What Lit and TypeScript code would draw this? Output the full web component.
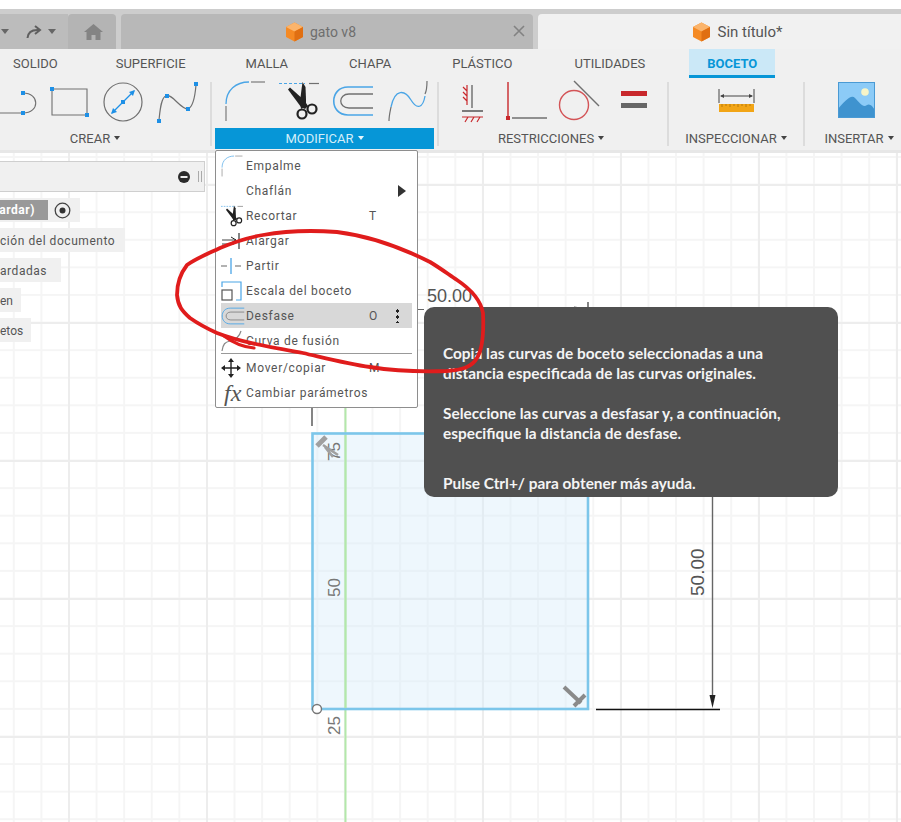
import { LitElement, html, css } from "lit";
import { customElement } from "lit/decorators.js";

const BLUE = "#4aa5e6";
const GREY = "#707070";

const square = (x: number, y: number, s = 4) =>
  html`<svg x=${x - s / 2} y=${y - s / 2} width=${s} height=${s} overflow="visible"><rect width=${s} height=${s} fill="#1e90e6"></rect></svg>`;

const fillet = (w: number, h: number) => html`<svg width=${w} height=${h} viewBox="0 0 42 42" fill="none">
  <path d="M2 26V41" stroke=${GREY} stroke-width="1.1"></path>
  <path d="M2 24C2 10 12 2 25 2" stroke=${BLUE} stroke-width="1.3"></path>
  <path d="M27 2H41" stroke=${GREY} stroke-width="1.1"></path>
</svg>`;

const scissors = (w: number, h: number) => html`<svg width=${w} height=${h} viewBox="0 0 40 40" fill="none">
  <path d="M0 2.5H26" stroke=${BLUE} stroke-width="1.2" stroke-dasharray="3 2"></path>
  <path d="M30 2.5H40" stroke=${GREY} stroke-width="1.2"></path>
  <path d="M9 8.5L11 6.5L25 19L29 25L26 28L22 26Z" fill="#222"></path>
  <path d="M23.5 1L26.5 6L27 18L27 25L22 28L21 20Z" fill="#222"></path>
  <circle cx="23" cy="33" r="4.5" stroke="#222" stroke-width="2.2"></circle>
  <circle cx="33" cy="28" r="4.5" stroke="#222" stroke-width="2.2"></circle>
</svg>`;

const offset = (w: number, h: number) => html`<svg width=${w} height=${h} viewBox="0 0 42 32" fill="none">
  <path d="M41 2H16C-3 2-3 30 16 30H41" stroke=${BLUE} stroke-width="1.6"></path>
  <path d="M41 9H17C6 9 6 23 17 23H41" stroke=${GREY} stroke-width="1.3"></path>
</svg>`;

const spline = (w: number, h: number) => html`<svg width=${w} height=${h} viewBox="0 0 42 42" fill="none">
  <path d="M2 41C2 36 3 32 4 27" stroke=${GREY} stroke-width="1.2"></path>
  <path d="M4 27C8 8 18 10 24 20C30 30 36 28 38 16" stroke=${BLUE} stroke-width="1.3"></path>
  <path d="M38 14C40 10 40 6 40 1" stroke=${GREY} stroke-width="1.2"></path>
</svg>`;

const cube = () => html`<svg width="19" height="20" viewBox="0 0 19 20">
  <path d="M9.5 0.5L18 5V15L9.5 19.5L1 15V5Z" fill="#f58a24"></path>
  <path d="M9.5 0.5L18 5L9.5 9.5L1 5Z" fill="#fbb46b"></path>
  <path d="M9.5 9.5L18 5V15L9.5 19.5Z" fill="#e06f12"></path>
</svg>`;

@customElement("app-root")
export class AppRoot extends LitElement {
  static styles = css`
    :host { display: block; width: 901px; height: 822px; position: relative; overflow: hidden; background: #fff; font-family: Roboto, "Liberation Sans", sans-serif; color: #555; }
    .top-gap { height: 9px; background: #fff; }
    .strip { height: 5px; background: #cdcdcd; }
    .tabbar { height: 35px; display: flex; background: #cdcdcd; }
    .qat { width: 68px; background: #bcbcbc; display: flex; align-items: center; gap: 6px; flex: none; }
    .tri { width: 0; height: 0; border-left: 4px solid transparent; border-right: 4px solid transparent; border-top: 5px solid #666; }
    .qat .tri:first-child { margin-left: 1px; margin-right: 11px; }
    .home { width: 48px; flex: none; background: #b4b4b4; border-radius: 4px 4px 0 0; display: flex; align-items: center; justify-content: center; padding-left: 3px; box-sizing: border-box; }
    .doc { flex: none; margin-left: 5px; width: 412px; background: #b8b8b8; border-radius: 4px 4px 0 0; display: flex; align-items: center; justify-content: center; color: #6e6e6e; font-size: 14px; position: relative; }
    .doc .x { position: absolute; left: 392px; top: 11px; }
    .doc.active { width: 363px; background: #f1f1f1; color: #555; border-radius: 4px 0 0 0; font-size: 15px; }
    .doc .in { display: flex; align-items: center; gap: 6px; margin-left: -13px; padding-top: 1px; }
    .doc.active .in { margin-left: 36px; }
    .ribbon { height: 101px; background: #f0f0f0; display: flex; flex-direction: column; }
    .tabs { height: 29px; display: flex; padding-left: 13px; font-size: 13px; align-items: center; }
    .tabs span { white-space: nowrap; }
    .tabs .m1 { margin-right: 58px; }
    .tabs .m2 { margin-right: 60px; }
    .tabs .m3 { margin-right: 61px; }
    .tabs .m4 { margin-right: 61px; }
    .tabs .m5 { margin-right: 62px; }
    .tabs .sel { margin-left: 44px; height: 29px; width: 86px; box-sizing: border-box; background: #cbe8f7; border-bottom: 3px solid #0696d7; color: #0696d7; font-weight: 700; display: flex; align-items: center; justify-content: center; padding-top: 3px; }
    .groups { display: flex; height: 71px; }
    .group { display: flex; flex-direction: column; flex: none; }
    .icons { height: 50px; box-sizing: border-box; padding-bottom: 4px; display: flex; align-items: center; overflow: hidden; }
    .label { height: 21px; font-size: 13px; display: flex; align-items: center; justify-content: center; gap: 4px; white-space: nowrap; box-sizing: border-box; padding-bottom: 1px; }
    .label .tri { border-top-color: #444; border-left-width: 3.5px; border-right-width: 3.5px; border-top-width: 4px; }
    .divider { width: 2px; height: 64px; background: #dcdcdc; flex: none; margin-top: 4px; }
    .g-crear { width: 210px; }
    .g-crear .label { padding-right: 20px; }
    .g-mod { width: 219px; margin: 0 3px; }
    .g-mod .icons { padding-left: 9px; gap: 13px; }
    .g-mod .label { background: #0696d7; color: #d4eef9; }
    .g-mod .label .tri { border-top-color: #e6f6fc; }
    .g-res { width: 228px; }
    .g-res .label { padding-right: 4px; }
    .g-ins { width: 134px; }
    .g-img { width: 96px; }
    .g-img .label { padding-left: 12px; }
    .canvas { position: relative; height: 672px; overflow: hidden; background-color: #fff;
      box-shadow: inset 0 3px 0 #e7e7e7;
      background-image:
        linear-gradient(#ededed 2px, transparent 2px),
        linear-gradient(90deg, #ededed 2px, transparent 2px),
        linear-gradient(#f5f5f5 2px, transparent 2px),
        linear-gradient(90deg, #f5f5f5 2px, transparent 2px);
      background-size: 138px 138px, 138px 138px, 27.6px 27.6px, 27.6px 27.6px;
      background-position: 0 34px, 68px 0, 0 6px, 12.8px 0;
    }
    .drawing { position: absolute; inset: 0; }
    .panel { position: absolute; left: 0; top: 11px; display: flex; flex-direction: column; align-items: flex-start; font-size: 12px; color: #555; }
    .browser { width: 205px; height: 31px; box-sizing: border-box; background: #f0f0f0; border: 1px solid #cfcfcf; border-left: 0; display: flex; align-items: center; justify-content: flex-end; gap: 8px; padding-right: 2px; margin-bottom: 6px; }
    .grip { width: 2px; height: 11px; border: 1px solid #aaa; border-width: 0 1px; }
    .chip { background: #f0f0f0; height: 24px; box-sizing: border-box; padding-top: 1px; display: flex; align-items: center; margin-bottom: 6px; white-space: nowrap; letter-spacing: 0.55px; }
    .chip.first { width: 80px; padding-top: 0; }
    .saved { background: #999; color: #fff; font-weight: 700; height: 20px; width: 48px; box-sizing: border-box; padding-right: 13px; overflow: hidden; display: flex; align-items: center; justify-content: flex-end; flex: none; }
    .radio { margin-left: 6px; }
    .c2 { padding-right: 10px; }
    .c3 { padding-right: 14px; }
    .c4 { padding-right: 8px; letter-spacing: 0; }
    .c5 { padding-right: 8px; letter-spacing: 0; }
    .menu { position: absolute; left: 215px; top: 0; width: 203px; height: 258px; box-sizing: border-box; background: #fff; border: 1px solid #8e8e8e; border-radius: 2px; padding: 2px 5px 0; font-size: 12px; color: #555; letter-spacing: 0.7px; }
    .row { display: grid; grid-template-columns: 25px 123px 20px 22px; height: 25px; align-items: center; }
    .row.hi { background: #d8d8d8; }
    .row .ic { display: flex; align-items: center; justify-content: flex-start; }
    .row .end { display: flex; justify-content: center; }
    .arrow { width: 0; height: 0; margin-left: 4px; border-top: 6px solid transparent; border-bottom: 6px solid transparent; border-left: 8px solid #333; }
    .kebab { width: 3px; height: 15px; margin-right: 5px; background: radial-gradient(circle at center, #222 1.5px, transparent 1.6px) center top / 3px 6px repeat-y; }
    .sep { height: 1px; background: #999; margin: 0 0 1px; }
    .fx { font-family: "Liberation Serif", serif; font-style: italic; font-size: 24px; color: #555; line-height: 20px; letter-spacing: 0; margin-left: 3px; }
    .tip { position: absolute; left: 424px; top: 157px; width: 414px; height: 190px; box-sizing: border-box; background: #505050; border-radius: 10px; padding: 36px 20px 0 19px; color: #f4f4f4; font-family: Lato, sans-serif; font-weight: 700; font-size: 15.4px; line-height: 20px; }
    .tip p { margin: 0 0 20px; white-space: nowrap; }
    .tip p.last { margin-top: 30px; }
    .scribble { position: absolute; inset: 0; pointer-events: none; }
  `;

  render() {
    const menu = [
      { t: "Empalme", ic: fillet(22, 22) },
      { t: "Chaflán", end: html`<div class="arrow"></div>` },
      { t: "Recortar", k: "T", ic: scissors(22, 22) },
      { t: "Alargar", ic: html`<svg width="24" height="20" viewBox="0 0 24 20" fill="none"><path d="M1 9H15M1 13H13" stroke="#444" stroke-width="1"></path><path d="M10 6L15 9L10 12" stroke="#222" fill="none"></path><path d="M18 2V18" stroke="#333" stroke-width="1.2"></path></svg>` },
      { t: "Partir", ic: html`<svg width="22" height="18" viewBox="0 0 22 18" fill="none"><path d="M0 9H6M14 9H20" stroke="#666" stroke-width="1.2"></path><path d="M10 1V17" stroke=${BLUE} stroke-width="1.3"></path></svg>` },
      { t: "Escala del boceto", ic: html`<svg width="22" height="20" viewBox="0 0 22 20" fill="none"><path d="M1 6V1H20V19H15" stroke=${BLUE} stroke-width="1.2"></path><rect x="1" y="9" width="10" height="10" stroke="#555" stroke-width="1.2"></rect></svg>` },
      { t: "Desfase", k: "O", hi: true, ic: offset(24, 18), end: html`<div class="kebab"></div>` },
      { t: "Curva de fusión", ic: html`<svg width="22" height="22" viewBox="0 0 22 22" fill="none"><path d="M1 21C2 14 4 12 9 11S18 8 20 1" stroke="#888" stroke-width="1.2"></path></svg>` },
      { sep: true },
      { t: "Mover/copiar", k: "M", ic: html`<svg width="20" height="20" viewBox="0 0 20 20" fill="#222"><path d="M9.3 4H10.7V9.3H16V10.7H10.7V16H9.3V10.7H4V9.3H9.3Z"></path><path d="M10 0L13 4H7ZM10 20L7 16H13ZM0 10L4 7V13ZM20 10L16 13V7Z"></path></svg>` },
      { t: "Cambiar parámetros", ic: html`<span class="fx">fx</span>` },
    ] as any[];

    return html`
      <div class="top-gap"></div>
      <div class="strip"></div>
      <div class="tabbar">
        <div class="qat">
          <div class="tri"></div>
          <svg width="16" height="14" viewBox="0 0 16 14" fill="none"><path d="M1.5 13C2 7 6 4.5 13 5" stroke="#5f5f5f" stroke-width="2"></path><path d="M9 1L14 5L9 9" stroke="#5f5f5f" stroke-width="2"></path></svg>
          <div class="tri"></div>
        </div>
        <div class="home">
          <svg width="19" height="16" viewBox="0 0 19 16"><path d="M9.5 0L19 8H16.5V16H11.5V11H7.5V16H2.5V8H0Z" fill="#848484"></path></svg>
        </div>
        <div class="doc">
          <div class="in">${cube()}<span>gato v8</span></div>
          <svg class="x" width="12" height="12" viewBox="0 0 12 12"><path d="M1 1L11 11M11 1L1 11" stroke="#828282" stroke-width="1.6"></path></svg>
        </div>
        <div class="doc active"><div class="in">${cube()}<span>Sin título*</span></div></div>
      </div>
      <div class="ribbon">
        <div class="tabs">
          <span class="m1">SOLIDO</span><span class="m2">SUPERFICIE</span><span class="m3">MALLA</span><span class="m4">CHAPA</span><span class="m5">PLÁSTICO</span><span>UTILIDADES</span><span class="sel">BOCETO</span>
        </div>
        <div class="groups">
          <div class="group g-crear">
            <div class="icons">
              <svg width="200" height="44" viewBox="0 0 200 44" fill="none">
                <path d="M0 34H23M23 14C40 14 40 34 23 34" stroke=${GREY} stroke-width="1.1"></path>
                ${square(23, 14)}${square(23, 34)}
                <path d="M52 10H87V36H52Z" stroke=${GREY} stroke-width="1.1"></path>
                ${square(52, 10)}${square(87, 36)}
                <circle cx="123" cy="23" r="19" stroke=${GREY} stroke-width="1.2"></circle>
                <path d="M112 34L134 12" stroke="#1e90e6" stroke-width="1.2"></path>
                <path d="M111 35L113 29L117 33ZM135 11L129 13L133 17Z" fill="#1e90e6"></path>
                ${square(123, 23)}
                <path d="M159 41C160 32 161 18 166 17C172 14 180 30 188 30C193 28 195 18 196 6" stroke=${GREY} stroke-width="1.2"></path>
                ${square(159, 42)}${square(167, 17)}${square(188, 30)}${square(196, 5)}
              </svg>
            </div>
            <div class="label"><span>CREAR</span><div class="tri"></div></div>
          </div>
          <div class="divider"></div>
          <div class="group g-mod">
            <div class="icons">
              ${fillet(42, 42)}${scissors(40, 40)}${offset(42, 32)}${spline(42, 42)}
            </div>
            <div class="label"><span>MODIFICAR</span><div class="tri"></div></div>
          </div>
          <div class="divider"></div>
          <div class="group g-res">
            <div class="icons">
              <svg width="226" height="44" viewBox="0 0 226 44" fill="none">
                <path d="M33 6V29" stroke="#555" stroke-width="1.2"></path>
                <path d="M28 6V26M24 8L28 12M24 13L28 17M24 18L28 22" stroke="#c8282c" stroke-width="1.2"></path>
                <path d="M23 32H44" stroke="#555" stroke-width="1.5"></path>
                <path d="M23 38H44M26 43L29 38M32 43L35 38M38 43L41 38" stroke="#c8282c" stroke-width="1.2"></path>
                <path d="M69 3V37" stroke="#c8282c" stroke-width="1.4"></path>
                <rect x="67" y="37" width="4" height="4" fill="#c8282c"></rect>
                <path d="M73 39H108" stroke=${GREY} stroke-width="1.4"></path>
                <circle cx="135" cy="26" r="14.5" stroke="#d35457" stroke-width="1.4"></circle>
                <path d="M135 2L160 27" stroke=${GREY} stroke-width="1.4"></path>
                <rect x="182" y="12" width="26" height="5" fill="#c8282c"></rect>
                <rect x="182" y="24" width="26" height="5" fill="#666"></rect>
              </svg>
            </div>
            <div class="label"><span>RESTRICCIONES</span><div class="tri"></div></div>
          </div>
          <div class="divider"></div>
          <div class="group g-ins">
            <div class="icons">
              <svg width="134" height="44" viewBox="0 0 134 44" fill="none">
                <path d="M50 10V24M85 10V24" stroke="#444" stroke-width="1"></path>
                <path d="M52 17H83" stroke="#444" stroke-width="1"></path>
                <path d="M51 17L55 15V19ZM84 17L80 15V19Z" fill="#444"></path>
                <rect x="50" y="25" width="35" height="8" fill="#f2a516"></rect>
                <path d="M53 25V28M57 25V27M61 25V28M65 25V27M69 25V28M73 25V27M77 25V28M81 25V27" stroke="#a86f08" stroke-width="0.8"></path>
              </svg>
            </div>
            <div class="label"><span>INSPECCIONAR</span><div class="tri"></div></div>
          </div>
          <div class="divider"></div>
          <div class="group g-img">
            <div class="icons">
              <svg width="96" height="44" viewBox="0 0 96 44">
                <rect x="33" y="3" width="37" height="36" fill="#8ccbf7"></rect>
                <circle cx="60" cy="13" r="3.8" fill="#f7f5c8"></circle>
                <path d="M33 30C40 22 46 15 50 19C55 24 58 29 62 26C65 24 68 28 70 31V39H33Z" fill="#3f93cf"></path>
                <rect x="33.5" y="3.5" width="36" height="35" fill="none" stroke="#4a9ad4"></rect>
              </svg>
            </div>
            <div class="label"><span>INSERTAR</span><div class="tri"></div></div>
          </div>
        </div>
      </div>
      <div class="canvas">
        <svg class="drawing" width="901" height="672" viewBox="0 150 901 672" fill="none" font-family="Liberation Sans, sans-serif">
          <path d="M345.5 150V822" stroke="#b3e8aa" stroke-width="2"></path>
          <rect x="312.5" y="433.5" width="275.5" height="275.5" fill="#d4ebf9" fill-opacity="0.4" stroke="#7cc6ea" stroke-width="2.6"></rect>
          <path d="M345.5 435V708" stroke="#b3e8aa" stroke-width="2"></path>
          <path d="M312 407V426" stroke="#333" stroke-width="1.2"></path>
          <path d="M417 309.5H424" stroke="#666"></path>
          <path d="M588 302V310" stroke="#333" stroke-width="1.2"></path>
          <path d="M574 307L588 309" stroke="#555"></path>
          <text x="427" y="302" font-size="18" fill="#555">50.00</text>
          <path d="M712.5 497V697" stroke="#666" stroke-width="1.4"></path>
          <path d="M712.5 708L709.5 695H715.5Z" fill="#222"></path>
          <path d="M596 709.5H720" stroke="#111" stroke-width="1.3"></path>
          <text transform="translate(704 596) rotate(-90)" font-size="19" fill="#555">50.00</text>
          <text transform="translate(340 597) rotate(-90)" font-size="17" fill="#777">50</text>
          <text transform="translate(340 735) rotate(-90)" font-size="17" fill="#777">25</text>
          <text transform="translate(340 461) rotate(-90)" font-size="17" fill="#777">75</text>
          <path d="M317 446L326 437" stroke="#a0a0a0" stroke-width="5"></path>
          <path d="M323 445L338 455M325 447L333 457" stroke="#a0a0a0" stroke-width="2.6"></path>
          <path d="M564 687L581 703" stroke="#8a8a8a" stroke-width="4"></path>
          <path d="M574 706L585 695" stroke="#8a8a8a" stroke-width="4"></path>
          <circle cx="317" cy="709" r="4.5" fill="#fff" stroke="#777" stroke-width="1.4"></circle>
        </svg>
        <div class="panel">
          <div class="browser">
            <svg width="12" height="12" viewBox="0 0 12 12"><circle cx="6" cy="6" r="6" fill="#2b2b2b"></circle><rect x="2.5" y="5" width="7" height="2" fill="#eee"></rect></svg>
            <div class="grip"></div>
          </div>
          <div class="chip first">
            <div class="saved"><span>ardar)</span></div>
            <svg class="radio" width="17" height="17" viewBox="0 0 17 17" fill="none"><circle cx="8.5" cy="8.5" r="7.3" stroke="#444" stroke-width="1.3"></circle><circle cx="8.5" cy="8.5" r="3" fill="#333"></circle></svg>
          </div>
          <div class="chip c2">ción del documento</div>
          <div class="chip c3">ardadas</div>
          <div class="chip c4">en</div>
          <div class="chip c5">etos</div>
        </div>
        <div class="menu">
          ${menu.map((m) =>
            m.sep
              ? html`<div class="sep"></div>`
              : html`<div class="row ${m.hi ? "hi" : ""}">
                  <div class="ic">${m.ic ?? ""}</div>
                  <span>${m.t}</span>
                  <span>${m.k ?? ""}</span>
                  <div class="end">${m.end ?? ""}</div>
                </div>`
          )}
        </div>
        <div class="tip">
          <p>Copia las curvas de boceto seleccionadas a una<br />distancia especificada de las curvas originales.</p>
          <p>Seleccione las curvas a desfasar y, a continuación,<br />especifique la distancia de desfase.</p>
          <p class="last">Pulse Ctrl+/ para obtener más ayuda.</p>
        </div>
      </div>
      <svg class="scribble" width="901" height="822" viewBox="0 0 901 822" fill="none">
        <path d="M430 262C400 247 370 236 337 232C310 230 285 231 263 235C245 238 232 243 220 248C205 255 195 259 187 265C180 274 177 285 177 295C178 306 182 311 190 318C200 325 208 329 217 333C240 342 270 347 303 353C325 358 348 364 370 367C395 371 420 372 447 371C462 370 472 367 477 358C482 350 484 335 483 313C481 302 472 290 457 280C448 274 440 268 430 262Z" stroke="#e01c1c" stroke-width="3.8" stroke-linejoin="round"></path>
        <path d="M224 336C232 342 242 347 254 348" stroke="#e01c1c" stroke-width="3.2" stroke-linecap="round"></path>
      </svg>
    `;
  }
}
